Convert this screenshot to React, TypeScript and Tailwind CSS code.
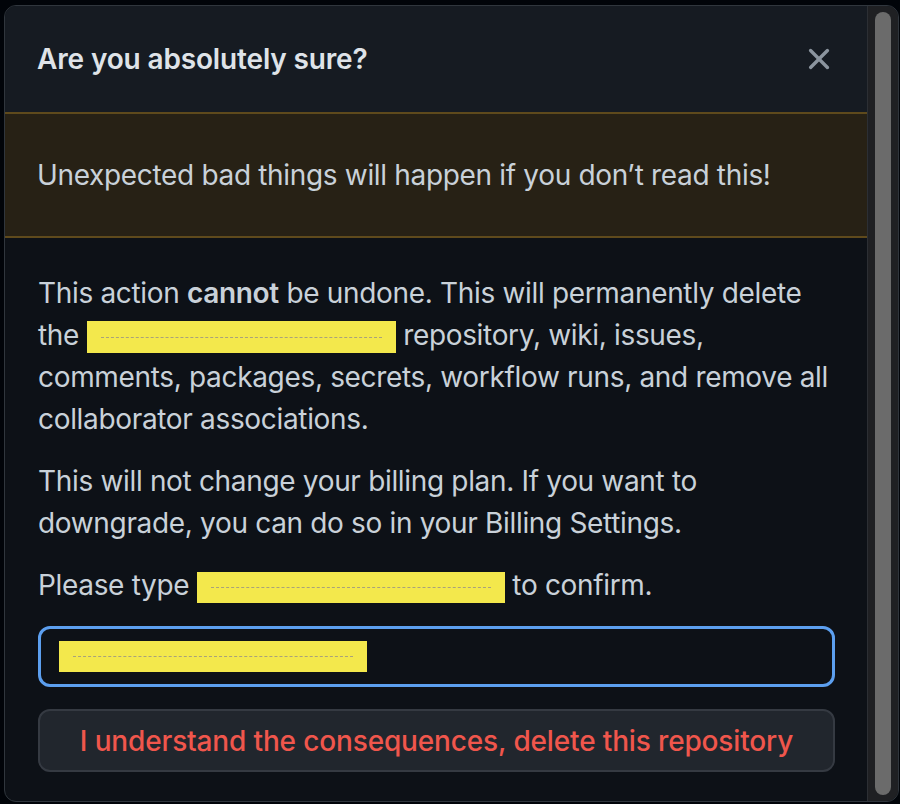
import type { ReactNode } from 'react';

function Redacted({ width, height = 32 }: { width: number; height?: number }) {
  return (
    <span
      className="relative inline-flex items-center bg-[#f3e84c] align-middle"
      style={{ width, height }}
    >
      <span className="mx-[14px] block h-0 flex-1 border-t border-dashed border-[#a9a27a]" />
    </span>
  );
}

function Para({ children }: { children: ReactNode }) {
  return (
    <p className="mb-[20px] whitespace-nowrap text-[28px] leading-[42px] tracking-[-0.33px] text-[#c9d1d9]">
      {children}
    </p>
  );
}

export default function App() {
  return (
    <div
      className="h-[804px] w-[900px] overflow-hidden bg-[#010409] pl-[4px] pt-[5px]"
      style={{ fontFamily: 'Inter, "Noto Sans", "Liberation Sans", sans-serif' }}
    >
      <div className="flex h-[797px] w-[895px] overflow-hidden rounded-[12px] border border-[#30363d] bg-[#0d1117]">
        <div className="flex w-[862px] shrink-0 flex-col">
          <div className="flex items-center justify-between bg-[#161b22] py-[32px] pl-[32px] pr-[30px]">
            <h3 className="text-[28px] font-semibold leading-[42px] tracking-[-0.15px] text-[#dfe3e8]">
              Are you absolutely sure?
            </h3>
            <button className="text-[#8b949e]" title="Close">
              <svg viewBox="0 0 16 16" fill="currentColor" className="h-[36px] w-[36px]">
                <path d="M3.72 3.72a.75.75 0 0 1 1.06 0L8 6.94l3.22-3.22a.749.749 0 0 1 1.275.326.749.749 0 0 1-.215.734L9.06 8l3.22 3.22a.749.749 0 0 1-.326 1.275.749.749 0 0 1-.734-.215L8 9.06l-3.22 3.22a.751.751 0 0 1-1.042-.018.751.751 0 0 1-.018-1.042L6.94 8 3.72 4.78a.75.75 0 0 1 0-1.06Z" />
              </svg>
            </button>
          </div>

          <div className="border-y-2 border-[#5f4a1c] bg-[#272115] py-[40px] pl-[32px] text-[28px] leading-[42px] tracking-[-0.33px] text-[#c9d1d9]">
            Unexpected bad things will happen if you don’t read this!
          </div>

          <div className="flex-1 pl-[33px] pr-[32px] pt-[34px]">
            <Para>
              This action <strong className="font-semibold">cannot</strong> be undone. This will permanently delete
              <br />
              the <Redacted width={309} /> repository, wiki, issues,
              <br />
              comments, packages, secrets, workflow runs, and remove all
              <br />
              collaborator associations.
            </Para>
            <Para>
              This will not change your billing plan. If you want to
              <br />
              downgrade, you can do so in your Billing Settings.
            </Para>
            <Para>
              Please type <Redacted width={308} height={31} /> to confirm.
            </Para>

            <div className="flex h-[61px] items-center rounded-[12px] border-[3px] border-[#5c9fef] pl-[18px]">
              <Redacted width={308} height={31} />
            </div>

            <button className="mt-[22px] h-[63px] w-full rounded-[12px] border-2 border-[#353a42] bg-[#21262d] text-[28px] font-medium tracking-[-0.15px] text-[#f0564c]">
              I understand the consequences, delete this repository
            </button>
          </div>
        </div>

        <div className="flex w-[31px] shrink-0 justify-center border-l border-[#2c2f34] bg-[#1f2023] py-[6px]">
          <div className="w-[16px] rounded-full bg-[#6b6b6b]" />
        </div>
      </div>
    </div>
  );
}
